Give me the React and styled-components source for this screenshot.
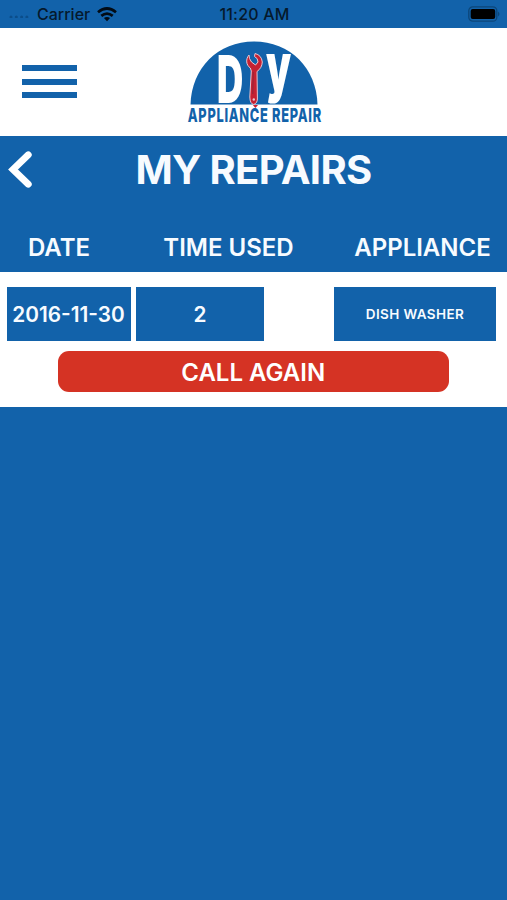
import React from 'react';
import styled, { createGlobalStyle } from 'styled-components';

const BLUE = '#1262aa';

const GlobalStyle = createGlobalStyle`
  *, *::before, *::after { box-sizing: border-box; }
  body { margin: 0; background: ${BLUE}; }
`;

const Screen = styled.div`
  min-height: 900px;
  background: ${BLUE};
  color: #f7fbff;
  font-family: Inter, "Liberation Sans", sans-serif;
  font-weight: 600;
  overflow: hidden;
`;

const StatusBar = styled.div`
  height: 28px;
  display: grid;
  grid-template-columns: 1fr auto 1fr;
  align-items: center;
  padding: 0 6px 0 8px;
  color: #05192c;
`;

const StatusText = styled.span`
  font-size: 16px;
  line-height: 28px;
  font-weight: 500;
  white-space: nowrap;
  letter-spacing: ${(p) => p.$spacing || 0}px;
`;

const Carrier = styled.div`
  display: flex;
  align-items: center;
  gap: 7px;
`;

const BatterySlot = styled.div`
  display: flex;
  justify-content: flex-end;
`;

const Header = styled.header`
  height: 108px;
  background: #fff;
  display: grid;
  grid-template-columns: 187px 135px 1fr;
  align-items: start;
`;

const MenuButton = styled.button`
  width: 55px;
  height: 33px;
  margin: 37px 0 0 22px;
  padding: 0;
  border: 0;
  background: none;
  display: flex;
  flex-direction: column;
  justify-content: space-between;
`;

const MenuLine = styled.span`
  width: 55px;
  height: 6px;
  background: ${BLUE};
`;

const Logo = styled.svg`
  width: 135px;
  height: 86px;
  margin-top: 12px;
  display: block;
  overflow: visible;
`;

const TitleBar = styled.div`
  height: 68px;
  display: grid;
  grid-template-columns: 40px 1fr 40px;
  align-items: center;
`;

const BackButton = styled.button`
  padding: 0 0 0 6px;
  border: 0;
  background: none;
  height: 40px;
  display: flex;
  justify-content: flex-start;
`;

const Title = styled.h1`
  margin: 0;
  font-size: 40px;
  line-height: 68px;
  font-weight: 700;
  letter-spacing: -0.65px;
  text-align: center;
  white-space: nowrap;
`;

const ColumnHeads = styled.div`
  height: 68px;
  display: grid;
  grid-template-columns: 118px 221px 167px;
  padding-top: 29px;
`;

const ColumnHead = styled.div`
  font-size: 24px;
  line-height: 30px;
  text-align: center;
  white-space: nowrap;
`;

const RepairCard = styled.section`
  height: 135px;
  background: #fff;
  padding: 15px 11px 0 6.5px;
  display: flex;
  flex-direction: column;
`;

const CellRow = styled.div`
  display: grid;
  grid-template-columns: 124px 128px 1fr;
  column-gap: 5.5px;
  height: 53.5px;
`;

const Cell = styled.div`
  background: ${BLUE};
  display: flex;
  align-items: center;
  justify-content: center;
  padding-top: 1px;
  font-size: 20.8px;
  white-space: nowrap;
`;

const ApplianceCell = styled(Cell)`
  width: 162px;
  justify-self: end;
  font-size: 13.5px;
  letter-spacing: 0.4px;
`;

const CallButton = styled.button`
  width: 391.5px;
  height: 41px;
  margin: 10.5px 0 0 51px;
  padding: 2px 0 0;
  border: 0;
  border-radius: 11px;
  background: #d53324;
  color: #fff;
  font: 600 24px/39px Inter, "Liberation Sans", sans-serif;
`;

function SignalDots() {
  return (
    <svg width="22" height="8" viewBox="0 0 22 8" fill="#0b4d8a">
      <circle cx="3" cy="7" r="1.5" />
      <circle cx="8.3" cy="7" r="1.5" />
      <circle cx="13.6" cy="7" r="1.5" />
      <circle cx="18.9" cy="7" r="1.5" />
    </svg>
  );
}

function WifiIcon() {
  return (
    <svg width="20" height="15" viewBox="0 0 20 15" fill="none" stroke="#020b14" strokeWidth="2.7">
      <path d="M1 5.2Q10-2.2 19 5.2" />
      <path d="M4.3 8.9Q10 4.2 15.7 8.9" />
      <path d="M10 14.2L6.9 11.1Q10 8.8 13.1 11.1Z" fill="#020b14" stroke="none" />
    </svg>
  );
}

function BatteryIcon() {
  return (
    <svg width="33" height="16" viewBox="0 0 33 16">
      <rect x="0.8" y="0.8" width="28" height="14.4" rx="4" fill="none" stroke="#0c4679" strokeWidth="1.3" />
      <rect x="2.7" y="3" width="24.5" height="10" rx="2" fill="#000" />
      <path d="M30 5.5Q33 8 30 10.5Z" fill="#0c4679" />
    </svg>
  );
}

function BackIcon() {
  return (
    <svg width="28" height="40" viewBox="0 0 28 40" fill="none" stroke="#fff" strokeWidth="6.8" strokeLinecap="round">
      <path d="M22.3 4.8L7 19.5L22.3 34.2" />
    </svg>
  );
}

function RepairLogo() {
  return (
    <Logo viewBox="187 40 135 86">
      <path d="M190.5 104.5C191.5 68 218 41.5 254 41.5S316.5 68 317.5 104.5Z" fill={BLUE} />
      <g fill="#fff" fontFamily="Inter, sans-serif" fontWeight="900" fontSize="66">
        <text transform="translate(217 102.5) scale(.55 1)">D</text>
        <text transform="translate(266 89.8) scale(.6 1)">y</text>
      </g>
      <g stroke="#e9c6cf" strokeWidth="1" fill="#c62132" strokeLinejoin="round">
        <path d="M249 55C245.5 59 246 65 250.3 68L251.3 71L249.8 97Q250 104 253.8 104.5Q257.7 103 257.4 98L257 71.5Q262 68 262.3 62Q261.5 55 255 53.5L254.5 56.5Q258 58 258 62L255.5 65L251.5 62Q248.8 58.5 249 55Z" />
      </g>
      <path d="M253.2 72L252.8 94" stroke="#8f263b" strokeWidth="1" />
      <circle cx="253.8" cy="99.5" r="1.2" fill="#e9c6cf" />
      <path d="M252.8 105H258L255.4 108Z" fill="#c62132" />
      <text transform="translate(187.8 122) scale(.66 1)" fontSize="19.4" fontFamily="Inter, sans-serif" fontWeight="800" fill={BLUE} textLength="202" lengthAdjust="spacing">APPLIANCE REPAIR</text>
    </Logo>
  );
}

export default function App() {
  return (
    <Screen>
      <GlobalStyle />
      <StatusBar>
        <Carrier>
          <SignalDots />
          <StatusText>Carrier</StatusText>
          <WifiIcon />
        </Carrier>
        <StatusText $spacing={0.2}>11:20 AM</StatusText>
        <BatterySlot><BatteryIcon /></BatterySlot>
      </StatusBar>
      <Header>
        <MenuButton aria-label="Menu">
          <MenuLine /><MenuLine /><MenuLine />
        </MenuButton>
        <RepairLogo />
      </Header>
      <TitleBar>
        <BackButton aria-label="Back"><BackIcon /></BackButton>
        <Title>MY REPAIRS</Title>
      </TitleBar>
      <ColumnHeads>
        <ColumnHead>DATE</ColumnHead>
        <ColumnHead>TIME USED</ColumnHead>
        <ColumnHead>APPLIANCE</ColumnHead>
      </ColumnHeads>
      <RepairCard>
        <CellRow>
          <Cell>2016-11-30</Cell>
          <Cell>2</Cell>
          <ApplianceCell>DISH WASHER</ApplianceCell>
        </CellRow>
        <CallButton>CALL AGAIN</CallButton>
      </RepairCard>
    </Screen>
  );
}
